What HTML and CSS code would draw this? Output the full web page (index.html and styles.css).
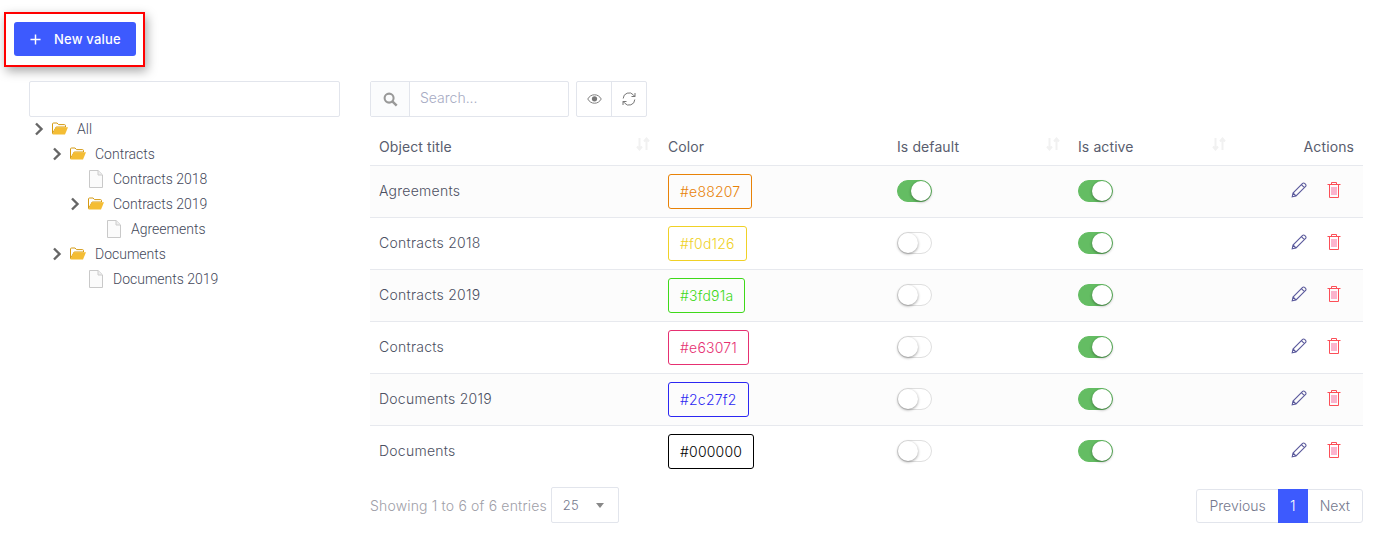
FILE: index.html
```html
<!DOCTYPE html>
<html lang="en">
<head>
<meta charset="utf-8">
<title>Values</title>
<link rel="stylesheet" href="styles.css">
</head>
<body>
<svg class="defs" width="0" height="0" aria-hidden="true">
  <symbol id="chev" viewBox="0 0 10 14"><path d="M2 1.500 7.500 7 2 12.500" fill="none" stroke="#666" stroke-width="2.400"/></symbol>
  <symbol id="folder" viewBox="0 0 16 13"><path d="M.5 11.500V2c0-.6.4-1 1-1h3.600l1.400 1.600h6c.6 0 1 .4 1 1V5H4.200L.5 11.500Z" fill="#fff" stroke="#d49a14"/><path d="M3.800 5.200H16l-3 7.300H.5Z" fill="#f4bd34"/></symbol>
  <symbol id="file" viewBox="0 0 14 18"><path d="M.5.5h8.600l4.400 4.400v12.600H.5Z" fill="#fbfbfb" stroke="#c9c9c9"/><path d="M9 .8v4.200h4.200" fill="#eee" stroke="#ccc"/></symbol>
  <symbol id="pencil" viewBox="0 0 16 16"><path d="M1.200 14.800 2 11 11.600 1.400a1.400 1.400 0 0 1 2 0l1 1a1.400 1.400 0 0 1 0 2L5 14Z M10.400 2.600l3 3 M2 11l3 3" fill="none" stroke="#5b5a9c" stroke-width="1.100"/></symbol>
  <symbol id="trash" viewBox="0 0 14 16"><path d="M.5 2.500h13M4.500 2.500v-2h5v2M2.500 2.500v13h9v-13" fill="none" stroke="#fc4f58" stroke-width="1"/><path d="M5 5v8M7 5v8M9 5v8" stroke="#f96a9c" stroke-width="1"/></symbol>
  <symbol id="sort" viewBox="0 0 14 14"><path d="M3.500 1v11M1 9.500l2.500 3 2.500-3M10.500 13V2M8 4.500l2.500-3 2.500 3" fill="none" stroke="#f1f1f1" stroke-width="2"/></symbol>
</svg>
<div class="top">
  <div class="highlight">
    <button class="new-btn"><svg class="plus" viewBox="0 0 12 12"><path d="M6 .5v11M.5 6h11" stroke="#fff" stroke-width="1.600"/></svg><span>New value</span></button>
  </div>
</div>
<main class="main">
  <aside class="side">
    <input class="tree-search" type="text" aria-label="Filter">
    <ul class="tree">
      <li class="node"><svg class="chev"><use href="#chev"/></svg><svg class="folder"><use href="#folder"/></svg><span>All</span></li>
      <li class="node l1"><svg class="chev"><use href="#chev"/></svg><svg class="folder"><use href="#folder"/></svg><span>Contracts</span></li>
      <li class="node l2"><svg class="file"><use href="#file"/></svg><span>Contracts 2018</span></li>
      <li class="node l2b"><svg class="chev"><use href="#chev"/></svg><svg class="folder"><use href="#folder"/></svg><span>Contracts 2019</span></li>
      <li class="node l3"><svg class="file"><use href="#file"/></svg><span>Agreements</span></li>
      <li class="node l1"><svg class="chev"><use href="#chev"/></svg><svg class="folder"><use href="#folder"/></svg><span>Documents</span></li>
      <li class="node l2"><svg class="file"><use href="#file"/></svg><span>Documents 2019</span></li>
    </ul>
  </aside>
  <section class="content">
    <div class="toolbar">
      <div class="search">
        <span class="search-ico"><svg viewBox="0 0 16 16" width="15" height="15"><circle cx="6.500" cy="6.500" r="4.800" fill="none" stroke="#999" stroke-width="2.200"/><path d="m10 10 4.600 4.600" stroke="#999" stroke-width="2.600"/></svg></span>
        <span class="search-input">Search...</span>
      </div>
      <div class="tools">
        <span class="tool"><svg viewBox="0 0 16 12" width="15" height="12"><path d="M.8 6C2.500 3 5 1.500 8 1.500S13.500 3 15.200 6C13.500 9 11 10.500 8 10.500S2.500 9 .8 6Z" fill="none" stroke="#777" stroke-width="1"/><circle cx="8" cy="5.800" r="2.800" fill="#777"/></svg></span>
        <span class="tool"><svg viewBox="0 0 14 14" width="14" height="14"><path d="M1.200 6.500A5.800 5.800 0 0 1 11.500 3L13 4.500M12.800 7.500A5.800 5.800 0 0 1 2.500 11L1 9.500M13 1v3.500H9.500M1 13V9.500h3.500" fill="none" stroke="#777" stroke-width="1"/></svg></span>
      </div>
    </div>
    <table class="grid">
      <thead>
        <tr>
          <th class="c1">Object title<svg class="sort"><use href="#sort"/></svg></th>
          <th class="c2">Color</th>
          <th class="c3">Is default<svg class="sort"><use href="#sort"/></svg></th>
          <th class="c4">Is active<svg class="sort"><use href="#sort"/></svg></th>
          <th class="c5">Actions</th>
        </tr>
      </thead>
      <tbody>
        <tr>
          <td class="name">Agreements</td>
          <td><span class="chip chip-orange">#e88207</span></td>
          <td><span class="switch on"></span></td>
          <td><span class="switch on"></span></td>
          <td class="act"><svg class="pencil"><use href="#pencil"/></svg><svg class="trash"><use href="#trash"/></svg></td>
        </tr>
        <tr>
          <td class="name">Contracts 2018</td>
          <td><span class="chip chip-yellow">#f0d126</span></td>
          <td><span class="switch"></span></td>
          <td><span class="switch on"></span></td>
          <td class="act"><svg class="pencil"><use href="#pencil"/></svg><svg class="trash"><use href="#trash"/></svg></td>
        </tr>
        <tr>
          <td class="name">Contracts 2019</td>
          <td><span class="chip chip-green">#3fd91a</span></td>
          <td><span class="switch"></span></td>
          <td><span class="switch on"></span></td>
          <td class="act"><svg class="pencil"><use href="#pencil"/></svg><svg class="trash"><use href="#trash"/></svg></td>
        </tr>
        <tr>
          <td class="name">Contracts</td>
          <td><span class="chip chip-pink">#e63071</span></td>
          <td><span class="switch"></span></td>
          <td><span class="switch on"></span></td>
          <td class="act"><svg class="pencil"><use href="#pencil"/></svg><svg class="trash"><use href="#trash"/></svg></td>
        </tr>
        <tr>
          <td class="name">Documents 2019</td>
          <td><span class="chip chip-blue">#2c27f2</span></td>
          <td><span class="switch"></span></td>
          <td><span class="switch on"></span></td>
          <td class="act"><svg class="pencil"><use href="#pencil"/></svg><svg class="trash"><use href="#trash"/></svg></td>
        </tr>
        <tr>
          <td class="name">Documents</td>
          <td><span class="chip chip-black">#000000</span></td>
          <td><span class="switch"></span></td>
          <td><span class="switch on"></span></td>
          <td class="act"><svg class="pencil"><use href="#pencil"/></svg><svg class="trash"><use href="#trash"/></svg></td>
        </tr>
      </tbody>
    </table>
    <div class="foot">
      <div class="info"><span>Showing 1 to 6 of 6 entries</span><span class="select">25<i class="caret"></i></span></div>
      <div class="pager"><span class="pg">Previous</span><span class="pg cur">1</span><span class="pg">Next</span></div>
    </div>
  </section>
</main>
</body>
</html>
```
FILE: styles.css
```css
* { box-sizing: border-box; }
html, body { margin: 0; padding: 0; }
body {
  width: 1383px;
  height: 560px;
  overflow: hidden;
  background: #fff;
  font-family: "Inter", "Liberation Sans", sans-serif;
  font-size: 14px;
  color: #595d6e;
}
.defs { position: absolute; }
.top { padding: 12px 0 0 4px; height: 81px; }
.highlight {
  width: 141px;
  height: 55px;
  border: 2px solid #f00;
  padding: 8px;
  box-shadow: 2px 4px 10px rgba(0,0,0,.35);
}
.new-btn {
  width: 122px;
  height: 34px;
  display: flex;
  align-items: center;
  padding: 0 16px;
  gap: 13px;
  background: #3d5afe;
  border: 0;
  border-radius: 3px;
  color: #fff;
  font: 500 13px "Inter", sans-serif;
  letter-spacing: .2px;
  white-space: nowrap;
}
.plus { width: 11px; height: 11px; flex: none; }
.main { display: flex; padding: 0 20px 0 29px; }
.side { width: 311px; margin-right: 30px; flex: none; }
.tree-search {
  display: block;
  width: 311px;
  height: 36px;
  border: 1px solid #e2e5ec;
  border-radius: 2px;
  background: #fff;
}
.tree {
  list-style: none;
  margin: -1px 0 0;
  padding: 0;
  font-family: "Roboto", sans-serif;
  font-size: 14px;
  font-weight: 300;
  color: #44485a;
}
.node { display: flex; align-items: center; height: 25px; padding-left: 5px; }
.node.l1 { padding-left: 23px; }
.node.l2 { padding-left: 60px; }
.node.l2b { padding-left: 41px; }
.node.l3 { padding-left: 78px; }
.chev { width: 10px; height: 14px; }
.folder { width: 16px; height: 13px; margin-left: 8px; margin-right: 9px; }
.file { width: 14px; height: 18px; margin-right: 10px; }
.content { flex: 1; min-width: 0; }
.toolbar { display: flex; gap: 7px; height: 36px; }
.search {
  display: flex;
  width: 199px;
  height: 36px;
  border: 1px solid #e2e5ec;
  border-radius: 2px;
}
.search-ico {
  width: 39px;
  display: flex;
  align-items: center;
  justify-content: center;
  background: #fbfcfd;
  border-right: 1px solid #e2e5ec;
}
.search-input { padding-left: 10px; line-height: 31px; color: #a7abc3; font-size: 14px; font-weight: 300; }
.tools { display: flex; height: 36px; border: 1px solid #e2e5ec; border-radius: 2px; }
.tool { width: 34px; display: flex; align-items: center; justify-content: center; }
.tool + .tool { width: 35px; border-left: 1px solid #e2e5ec; }
.grid {
  width: 993px;
  margin-top: 11px;
  border-collapse: collapse;
  table-layout: fixed;
  font-size: 14px;
}
.grid th {
  height: 37px;
  padding: 0 9px;
  text-align: left;
  font-weight: 400;
  letter-spacing: .1px;
  position: relative;
  border-bottom: 1px solid #e7e9ee;
}
.grid .c1 { width: 289px; }
.grid .c2 { width: 229px; }
.grid .c3 { width: 181px; }
.grid .c4 { width: 166px; }
.grid .c5 { text-align: right; }
.sort { position: absolute; right: 9px; top: 9px; width: 14px; height: 14px; }
.grid td {
  height: 52px;
  padding: 0 9px;
  font-weight: 300;
  border-bottom: 1px solid #e7e9ee;
  vertical-align: middle;
}
.grid td.name { padding-bottom: 2px; letter-spacing: .25px; color: #4c5062; }
.grid tbody tr:nth-child(odd) td { background: #fcfcfc; }
.grid tbody tr:last-child td { border-bottom: 0; background: #fff; }
.chip {
  display: inline-block;
  height: 35px;
  line-height: 33px;
  padding: 0 11px;
  border: 1px solid;
  border-radius: 3px;
  vertical-align: middle;
  letter-spacing: .2px;
}
.chip-orange { color: #e88207; }
.chip-yellow { color: #f0d126; }
.chip-green { color: #3fd91a; }
.chip-pink { color: #e63071; }
.chip-blue { color: #2c27f2; }
.chip-black { color: #000; }
.switch {
  display: block;
  position: relative;
  width: 35px;
  height: 22px;
  border: 1px solid #dfdfdf;
  border-radius: 11px;
  background: #fff;
}
.switch::after {
  content: "";
  position: absolute;
  top: 0;
  left: 0;
  width: 20px;
  height: 20px;
  border-radius: 50%;
  background: #fff;
  box-shadow: 0 1px 3px rgba(0,0,0,.4);
}
.switch.on { background: #64bd63; border-color: #64bd63; }
.switch.on::after { left: 13px; }
.grid td.act { padding-left: 56px; }
.pencil { width: 16px; height: 16px; margin-right: 20px; vertical-align: -1px; }
.trash { width: 14px; height: 16px; vertical-align: -1px; }
.foot {
  display: flex;
  justify-content: space-between;
  align-items: flex-end;
  margin-top: 10px;
  width: 993px;
}
.info { display: flex; align-items: center; gap: 4px; color: #a0a0a8; font-weight: 300; letter-spacing: .17px; }
.select {
  position: relative;
  width: 68px;
  height: 36px;
  line-height: 34px;
  padding-left: 11px;
  border: 1px solid #e2e5ec;
  border-radius: 2px;
  font-size: 13px;
  color: #74788d;
}
.caret {
  position: absolute;
  right: 14px;
  top: 15px;
  border: 4px solid transparent;
  border-top: 5px solid #888;
  border-bottom: 0;
}
.pager { display: flex; height: 34px; border: 1px solid #e2e5ec; border-radius: 3px; color: #74788d; }
.pg { padding: 0 12px; line-height: 32px; font-weight: 300; }
.pg.cur { width: 30px; padding: 0; margin: -1px 0; height: 34px; line-height: 34px; text-align: center; background: #3d5afe; color: #fff; }
```
